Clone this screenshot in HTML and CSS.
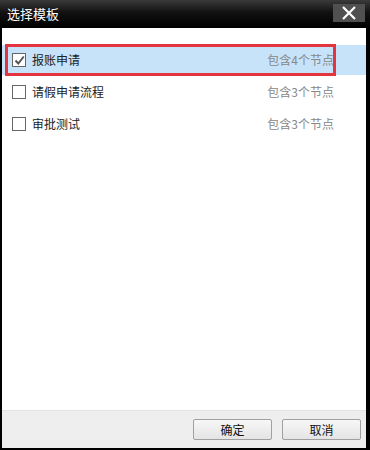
FILE: index.html
```html
<!DOCTYPE html>
<html>
<head>
<meta charset="utf-8">
<link rel="stylesheet" href="styles.css">
</head>
<body>
<div class="window">
  <div class="titlebar">
    <span class="title">选择模板</span>
    <div class="close">
      <svg width="16" height="14" viewBox="0 0 16 14"><path d="M2 1 L14 13 M14 1 L2 13" stroke="#fff" stroke-width="2.2" fill="none"/></svg>
    </div>
  </div>
  <div class="content">
    <div class="list">
      <div class="row selected">
        <span class="check checked">
          <svg width="11" height="11" viewBox="0 0 11 11"><path d="M1.5 5.5 L4.3 8.5 L9.8 1.5" stroke="#555" stroke-width="2" fill="none"/></svg>
        </span>
        <span class="name">报账申请</span>
        <span class="count">包含4个节点</span>
        <div class="mark"></div>
      </div>
      <div class="row">
        <span class="check"></span>
        <span class="name">请假申请流程</span>
        <span class="count">包含3个节点</span>
      </div>
      <div class="row">
        <span class="check"></span>
        <span class="name">审批测试</span>
        <span class="count">包含3个节点</span>
      </div>
    </div>
  </div>
  <div class="footer">
    <button class="btn">确定</button>
    <button class="btn">取消</button>
  </div>
</div>
</body>
</html>
```
FILE: styles.css
```css
html, body {
  margin: 0;
  padding: 0;
  width: 370px;
  height: 450px;
  overflow: hidden;
  background: #000;
}
body {
  font-family: "Noto Sans CJK SC", "Liberation Sans", sans-serif;
  font-size: 12px;
}
.window {
  width: 370px;
  height: 450px;
  box-sizing: border-box;
  display: flex;
  flex-direction: column;
  background: #000;
  padding: 0 4px 2px 2px;
}
.titlebar {
  height: 28px;
  margin: 0 -4px 0 -2px;
  background: linear-gradient(#3a3a3a, #111 45%, #000);
  display: flex;
  align-items: flex-start;
  justify-content: space-between;
  box-sizing: border-box;
}
.title {
  color: #fff;
  font-size: 13px;
  line-height: 14px;
  margin: 7px 0 0 7px;
}
.close {
  width: 32px;
  height: 18px;
  margin: 4px 5px 0 0;
  background: #505050;
  display: flex;
  align-items: center;
  justify-content: center;
}
.content {
  flex: 1;
  background: #fff;
  padding-top: 16px;
}
.list {
  display: flex;
  flex-direction: column;
}
.row {
  position: relative;
  height: 32px;
  display: flex;
  align-items: center;
  padding-left: 10px;
  color: #222;
}
.row.selected {
  background: linear-gradient(#fff 0, #fff 1px, #c6e3fa 1px, #c6e3fa 31px, #fff 31px);
}
.check {
  width: 12px;
  height: 12px;
  border: 1px solid #666;
  background: #fff;
  display: flex;
  align-items: center;
  justify-content: center;
  margin-right: 6px;
}
.name {
  flex: 1;
  line-height: 14px;
}
.count {
  width: 100px;
  text-align: right;
  margin-right: 32px;
  color: #888;
  line-height: 14px;
}
.mark {
  position: absolute;
  left: 3px;
  top: 0;
  width: 331px;
  height: 32px;
  box-sizing: border-box;
  border: 3px solid #e3343f;
}
.footer {
  height: 37px;
  background: #eeeeee;
  border-top: 1px solid #e2e2e2;
  display: flex;
  align-items: center;
  justify-content: flex-end;
  gap: 10px;
  padding-right: 5px;
}
.btn {
  width: 79px;
  height: 21px;
  font-family: "Noto Sans CJK SC", sans-serif;
  font-size: 12px;
  color: #111;
  background: linear-gradient(#f7f7f7, #e4e4e4);
  border: 1px solid #a0a0a0;
  border-radius: 2px;
  padding: 0;
  line-height: 18px;
}
```
